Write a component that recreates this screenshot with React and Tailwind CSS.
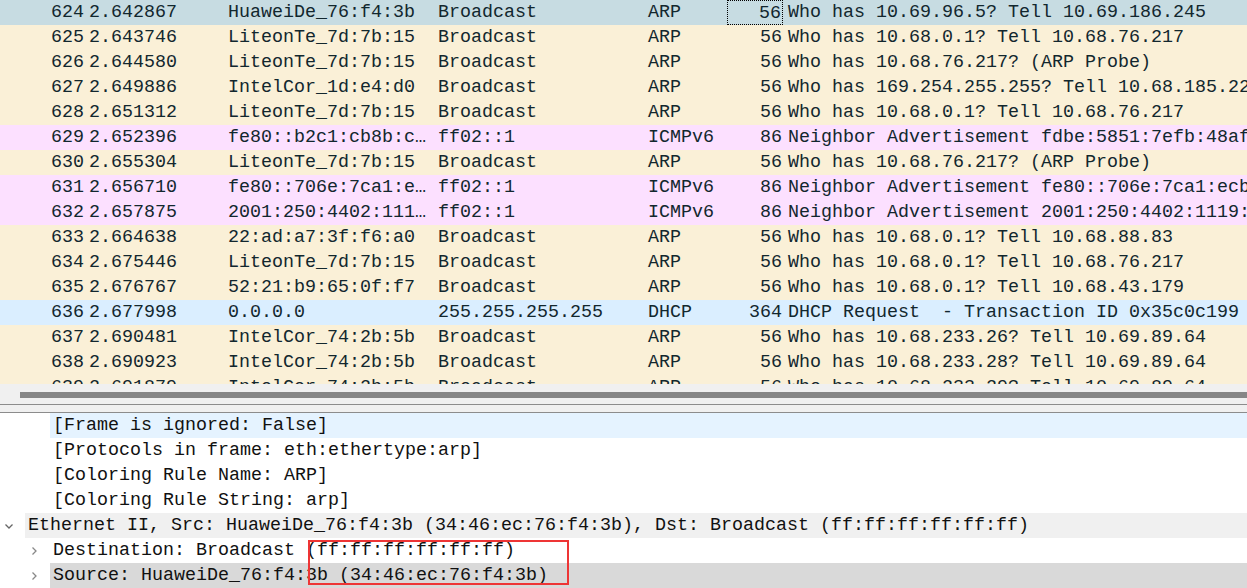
const ROWS = [
  { no: 624, t: "2.642867", src: "HuaweiDe_76:f4:3b", dst: "Broadcast", proto: "ARP", len: 56, info: "Who has 10.69.96.5? Tell 10.69.186.245", kind: "sel" },
  { no: 625, t: "2.643746", src: "LiteonTe_7d:7b:15", dst: "Broadcast", proto: "ARP", len: 56, info: "Who has 10.68.0.1? Tell 10.68.76.217", kind: "arp" },
  { no: 626, t: "2.644580", src: "LiteonTe_7d:7b:15", dst: "Broadcast", proto: "ARP", len: 56, info: "Who has 10.68.76.217? (ARP Probe)", kind: "arp" },
  { no: 627, t: "2.649886", src: "IntelCor_1d:e4:d0", dst: "Broadcast", proto: "ARP", len: 56, info: "Who has 169.254.255.255? Tell 10.68.185.22", kind: "arp" },
  { no: 628, t: "2.651312", src: "LiteonTe_7d:7b:15", dst: "Broadcast", proto: "ARP", len: 56, info: "Who has 10.68.0.1? Tell 10.68.76.217", kind: "arp" },
  { no: 629, t: "2.652396", src: "fe80::b2c1:cb8b:c…", dst: "ff02::1", proto: "ICMPv6", len: 86, info: "Neighbor Advertisement fdbe:5851:7efb:48af", kind: "icmp" },
  { no: 630, t: "2.655304", src: "LiteonTe_7d:7b:15", dst: "Broadcast", proto: "ARP", len: 56, info: "Who has 10.68.76.217? (ARP Probe)", kind: "arp" },
  { no: 631, t: "2.656710", src: "fe80::706e:7ca1:e…", dst: "ff02::1", proto: "ICMPv6", len: 86, info: "Neighbor Advertisement fe80::706e:7ca1:ecb", kind: "icmp" },
  { no: 632, t: "2.657875", src: "2001:250:4402:111…", dst: "ff02::1", proto: "ICMPv6", len: 86, info: "Neighbor Advertisement 2001:250:4402:1119:", kind: "icmp" },
  { no: 633, t: "2.664638", src: "22:ad:a7:3f:f6:a0", dst: "Broadcast", proto: "ARP", len: 56, info: "Who has 10.68.0.1? Tell 10.68.88.83", kind: "arp" },
  { no: 634, t: "2.675446", src: "LiteonTe_7d:7b:15", dst: "Broadcast", proto: "ARP", len: 56, info: "Who has 10.68.0.1? Tell 10.68.76.217", kind: "arp" },
  { no: 635, t: "2.676767", src: "52:21:b9:65:0f:f7", dst: "Broadcast", proto: "ARP", len: 56, info: "Who has 10.68.0.1? Tell 10.68.43.179", kind: "arp" },
  { no: 636, t: "2.677998", src: "0.0.0.0", dst: "255.255.255.255", proto: "DHCP", len: 364, info: "DHCP Request  - Transaction ID 0x35c0c199", kind: "udp" },
  { no: 637, t: "2.690481", src: "IntelCor_74:2b:5b", dst: "Broadcast", proto: "ARP", len: 56, info: "Who has 10.68.233.26? Tell 10.69.89.64", kind: "arp" },
  { no: 638, t: "2.690923", src: "IntelCor_74:2b:5b", dst: "Broadcast", proto: "ARP", len: 56, info: "Who has 10.68.233.28? Tell 10.69.89.64", kind: "arp" },
  { no: 639, t: "2.691879", src: "IntelCor_74:2b:5b", dst: "Broadcast", proto: "ARP", len: 56, info: "Who has 10.68.233.29? Tell 10.69.89.64", kind: "arp" },
];

const BG = {
  sel: "bg-[#c7dce2]",
  arp: "bg-[#faf0d7]",
  icmp: "bg-[#fce0ff]",
  udp: "bg-[#daeeff]",
};

function Chevron({ down }) {
  return (
    <svg width="10" height="10" viewBox="0 0 10 10" className="shrink-0">
      {down ? (
        <path d="M1.5 3.5 L5 7 L8.5 3.5" fill="none" stroke="#666" strokeWidth="1.3" />
      ) : (
        <path d="M3.5 1.5 L7 5 L3.5 8.5" fill="none" stroke="#888" strokeWidth="1.3" />
      )}
    </svg>
  );
}

function PacketRow({ r }) {
  const sel = r.kind === "sel";
  return (
    <div className={`flex h-[25px] pt-[1px] leading-[24px] whitespace-pre text-[#12272e] ${BG[r.kind]}`}>
      <div className="w-[84px] shrink-0 text-right">{r.no}</div>
      <div className="w-[139px] shrink-0 pl-[5px]">{r.t}</div>
      <div className="w-[210px] shrink-0 pl-[5px]">{r.src}</div>
      <div className="w-[210px] shrink-0 pl-[5px]">{r.dst}</div>
      <div className="w-[84px] shrink-0 pl-[5px]">{r.proto}</div>
      <div
        className={`w-[56px] shrink-0 text-right pr-[1px] ${
          sel ? "border border-dotted border-black -mt-[1px] leading-[23px] pt-[1px]" : ""
        }`}
      >
        {r.len}
      </div>
      <div className="pl-[5px]">{r.info}</div>
    </div>
  );
}

function DetailRow({ indent, chevron, bg, children }) {
  return (
    <div className="flex h-[25px] whitespace-pre text-[#111]">
      <div className={`flex items-center justify-end pr-[11px] ${indent ? "w-[50px]" : "w-[25px]"}`}>
        {chevron}
      </div>
      <div className={`flex-1 pl-[3px] pt-[1px] leading-[24px] ${bg || ""}`}>{children}</div>
    </div>
  );
}

export default function App() {
  return (
    <div
      className="w-[1247px] h-[588px] overflow-hidden bg-white text-[18.33px]"
      style={{ fontFamily: '"Liberation Mono", "DejaVu Sans Mono", monospace' }}
    >
      {/* packet list */}
      <div className="h-[384px] overflow-hidden">
        {ROWS.map((r) => (
          <PacketRow key={r.no} r={r} />
        ))}
      </div>

      {/* horizontal scrollbar + splitter */}
      <div className="h-[20px] bg-[#f0f0f0] pt-[8px] pl-[20px]">
        <div className="h-[6px] bg-[#868686]" />
      </div>
      <div className="h-[1px] bg-[#8c8c8c]" />
      <div className="h-[7px] bg-[#f0f0f0]" />
      <div className="h-[1px] bg-[#8c8c8c]" />

      {/* packet details */}
      <div className="relative">
        <DetailRow indent bg="bg-[#e5f3ff]">[Frame is ignored: False]</DetailRow>
        <DetailRow indent>[Protocols in frame: eth:ethertype:arp]</DetailRow>
        <DetailRow indent>[Coloring Rule Name: ARP]</DetailRow>
        <DetailRow indent>[Coloring Rule String: arp]</DetailRow>
        <DetailRow chevron={<Chevron down />} bg="bg-[#f0f0f0]">
          Ethernet II, Src: HuaweiDe_76:f4:3b (34:46:ec:76:f4:3b), Dst: Broadcast (ff:ff:ff:ff:ff:ff)
        </DetailRow>
        <DetailRow indent chevron={<Chevron />}>
          Destination: Broadcast (ff:ff:ff:ff:ff:ff)
        </DetailRow>
        <DetailRow indent chevron={<Chevron />} bg="bg-[#d9d9d9]">
          Source: HuaweiDe_76:f4:3b (34:46:ec:76:f4:3b)
        </DetailRow>

        {/* red annotation box */}
        <div className="absolute left-[308px] top-[127px] w-[261px] h-[45px] border-2 border-[#ee3535]" />
      </div>
    </div>
  );
}
